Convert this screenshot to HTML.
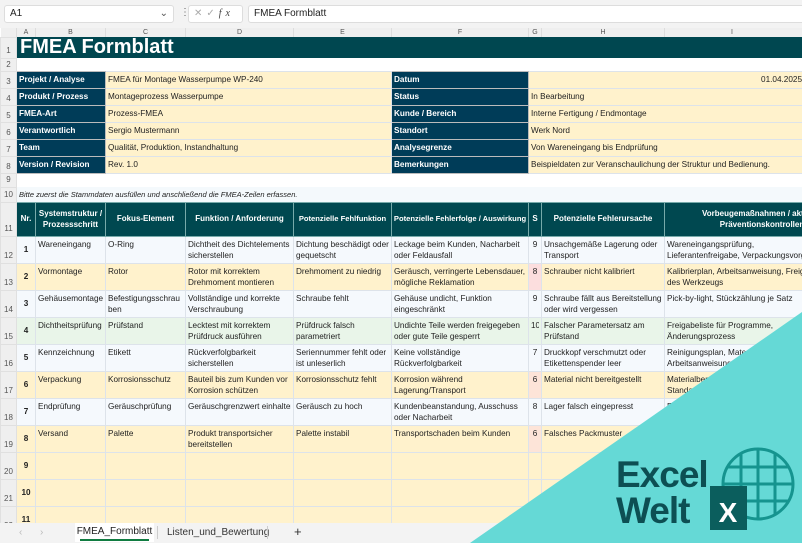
<!DOCTYPE html>
<html><head><meta charset="utf-8"><style>
*{margin:0;padding:0;box-sizing:border-box}
body{width:802px;height:543px;overflow:hidden;background:#fff;font-family:"Liberation Sans",sans-serif;position:relative;color:#222}
#fb{position:absolute;left:0;top:0;width:802px;height:28px;background:#f3f3f3}
.box{position:absolute;top:5px;height:18px;background:#fff;border:1px solid #ddd;border-radius:3px;font-size:10px;line-height:16px;padding-left:5px}
table{position:absolute;left:0;top:28px;border-collapse:collapse;table-layout:fixed;width:864px}
td{overflow:hidden;white-space:nowrap;font-size:8.2px;line-height:11.5px;padding:0 2px;vertical-align:top;border:1px solid #dde3ea}
td.rh{background:#efefef;color:#555;text-align:center;vertical-align:bottom;border:1px solid #e0e0e0;font-size:8px;padding:0 0 1px}
tr.ch td{background:#efefef;color:#555;text-align:center;font-size:7px;line-height:8px;padding:0;vertical-align:middle;border:none;border-right:1px solid #ddd}
.t{background:#004750;color:#fff;font-weight:bold;font-size:20px;vertical-align:middle;padding-left:3px;border:none}
.lb{background:#003c58;color:#fff;font-weight:bold;vertical-align:middle;border:1px solid #bbb}
.y{background:#fff2cc;vertical-align:middle}
.hd td.h{background:#004850;color:#fff;font-weight:bold;text-align:center;vertical-align:middle;border:1px solid #7aa;font-size:8px}
.hd td.h div{height:32px;display:flex;align-items:center;justify-content:center;white-space:normal;overflow:hidden}
tr.d td div{height:26px;overflow:hidden;white-space:normal;padding-top:2px}
tr.d td.n div{display:flex;align-items:center;justify-content:center;padding:0}
.w{background:#f5f9fd}.g{background:#e9f5e9}.n{font-weight:bold}
.s{text-align:center}
.pk{background:#fcdede}.pe{background:#fde4d8}
#tabs{position:absolute;left:0;top:523px;width:802px;height:20px;background:#f3f3f3;font-size:10px}
</style></head><body>
<div id="fb">
<div class="box" style="left:4px;width:170px">A1<span style="position:absolute;right:5px;color:#555">&#8964;</span></div>
<div style="position:absolute;left:180px;top:7px;font-size:10px;color:#666">&#8942;</div>
<div class="box" style="left:188px;width:55px;color:#aaa;letter-spacing:4px">✕✓<i style="color:#444;font-family:'Liberation Serif',serif">fx</i></div>
<div class="box" style="left:248px;width:560px">FMEA Formblatt</div>
</div>
<table>
<colgroup><col style="width:16px"><col style="width:19px"><col style="width:70px"><col style="width:80px"><col style="width:108px"><col style="width:98px"><col style="width:137px"><col style="width:13px"><col style="width:123px"><col style="width:200px"></colgroup>
<tr class="ch" style="height:9px"><td></td><td>A</td><td>B</td><td>C</td><td>D</td><td>E</td><td>F</td><td>G</td><td>H</td><td style="text-align:left;padding-left:66px">I</td></tr>
<tr style="height:21px"><td class="rh">1</td><td class="t" colspan="9">FMEA Formblatt</td></tr>
<tr style="height:11px"><td class="rh">2</td><td colspan="9" style="border:none"></td></tr>
<tr style="height:17px"><td class="rh">3</td><td class="lb" colspan="2">Projekt / Analyse</td><td class="y" colspan="3">FMEA für Montage Wasserpumpe WP-240</td><td class="lb">Datum</td><td class="y" colspan="3" style="text-align:right;padding-right:62px">01.04.2025</td></tr>
<tr style="height:17px"><td class="rh">4</td><td class="lb" colspan="2">Produkt / Prozess</td><td class="y" colspan="3">Montageprozess Wasserpumpe</td><td class="lb">Status</td><td class="y" colspan="3">In Bearbeitung</td></tr>
<tr style="height:17px"><td class="rh">5</td><td class="lb" colspan="2">FMEA-Art</td><td class="y" colspan="3">Prozess-FMEA</td><td class="lb">Kunde / Bereich</td><td class="y" colspan="3">Interne Fertigung / Endmontage</td></tr>
<tr style="height:17px"><td class="rh">6</td><td class="lb" colspan="2">Verantwortlich</td><td class="y" colspan="3">Sergio Mustermann</td><td class="lb">Standort</td><td class="y" colspan="3">Werk Nord</td></tr>
<tr style="height:17px"><td class="rh">7</td><td class="lb" colspan="2">Team</td><td class="y" colspan="3">Qualität, Produktion, Instandhaltung</td><td class="lb">Analysegrenze</td><td class="y" colspan="3">Von Wareneingang bis Endprüfung</td></tr>
<tr style="height:17px"><td class="rh">8</td><td class="lb" colspan="2">Version / Revision</td><td class="y" colspan="3">Rev. 1.0</td><td class="lb">Bemerkungen</td><td class="y" colspan="3">Beispieldaten zur Veranschaulichung der Struktur und Bedienung.</td></tr>
<tr style="height:11px"><td class="rh">9</td><td colspan="9" style="border:none"></td></tr>
<tr style="height:15px"><td class="rh">10</td><td colspan="9" style="background:#f4f9fc;font-style:italic;font-size:7.5px;vertical-align:middle;border:none">Bitte zuerst die Stammdaten ausfüllen und anschließend die FMEA-Zeilen erfassen.</td></tr>
<tr class="hd" style="height:34px"><td class="rh">11</td><td class="h"><div>Nr.</div></td><td class="h"><div>Systemstruktur / Prozessschritt</div></td><td class="h"><div>Fokus-Element</div></td><td class="h"><div>Funktion / Anforderung</div></td><td class="h"><div style="white-space:nowrap;font-size:7.6px">Potenzielle Fehlfunktion</div></td><td class="h"><div style="white-space:nowrap;font-size:7.6px">Potenzielle Fehlerfolge / Auswirkung</div></td><td class="h"><div>S</div></td><td class="h"><div>Potenzielle Fehlerursache</div></td><td class="h"><div style="justify-content:flex-start;padding-left:20px;width:170px;text-align:center">Vorbeugemaßnahmen / aktuelle Präventionskontrollen</div></td></tr>
<tr class="d w"><td class="rh">12</td><td class="n"><div>1</div></td><td><div>Wareneingang</div></td><td><div>O-Ring</div></td><td><div>Dichtheit des Dichtelements sicherstellen</div></td><td><div>Dichtung beschädigt oder gequetscht</div></td><td><div>Leckage beim Kunden, Nacharbeit oder Feldausfall</div></td><td class="s"><div>9</div></td><td><div>Unsachgemäße Lagerung oder Transport</div></td><td><div>Wareneingangsprüfung,<br>Lieferantenfreigabe, Verpackungsvorgabe</div></td></tr>
<tr class="d y"><td class="rh">13</td><td class="n"><div>2</div></td><td><div>Vormontage</div></td><td><div>Rotor</div></td><td><div>Rotor mit korrektem Drehmoment montieren</div></td><td><div>Drehmoment zu niedrig</div></td><td><div>Geräusch, verringerte Lebensdauer, mögliche Reklamation</div></td><td class="s pk"><div>8</div></td><td><div>Schrauber nicht kalibriert</div></td><td><div>Kalibrierplan, Arbeitsanweisung, Freigabe<br>des Werkzeugs</div></td></tr>
<tr class="d w"><td class="rh">14</td><td class="n"><div>3</div></td><td><div>Gehäusemontage</div></td><td><div style="word-break:break-all">Befestigungsschrauben</div></td><td><div>Vollständige und korrekte Verschraubung</div></td><td><div>Schraube fehlt</div></td><td><div>Gehäuse undicht, Funktion eingeschränkt</div></td><td class="s"><div>9</div></td><td><div>Schraube fällt aus Bereitstellung oder wird vergessen</div></td><td><div>Pick-by-light, Stückzählung je Satz</div></td></tr>
<tr class="d g"><td class="rh">15</td><td class="n"><div>4</div></td><td><div>Dichtheitsprüfung</div></td><td><div>Prüfstand</div></td><td><div>Lecktest mit korrektem Prüfdruck ausführen</div></td><td><div>Prüfdruck falsch parametriert</div></td><td><div>Undichte Teile werden freigegeben oder gute Teile gesperrt</div></td><td class="s"><div>10</div></td><td><div>Falscher Parametersatz am Prüfstand</div></td><td><div>Freigabeliste für Programme,<br>Änderungsprozess</div></td></tr>
<tr class="d w"><td class="rh">16</td><td class="n"><div>5</div></td><td><div>Kennzeichnung</div></td><td><div>Etikett</div></td><td><div>Rückverfolgbarkeit sicherstellen</div></td><td><div>Seriennummer fehlt oder ist unleserlich</div></td><td><div>Keine vollständige Rückverfolgbarkeit</div></td><td class="s"><div>7</div></td><td><div>Druckkopf verschmutzt oder Etikettenspender leer</div></td><td><div>Reinigungsplan, Materialprüfung,<br>Arbeitsanweisung</div></td></tr>
<tr class="d y"><td class="rh">17</td><td class="n"><div>6</div></td><td><div>Verpackung</div></td><td><div>Korrosionsschutz</div></td><td><div>Bauteil bis zum Kunden vor Korrosion schützen</div></td><td><div>Korrosionsschutz fehlt</div></td><td><div>Korrosion während Lagerung/Transport</div></td><td class="s pe"><div>6</div></td><td><div>Material nicht bereitgestellt</div></td><td><div>Materialbereitstellung,<br>Standardarbeit</div></td></tr>
<tr class="d w"><td class="rh">18</td><td class="n"><div>7</div></td><td><div>Endprüfung</div></td><td><div>Geräuschprüfung</div></td><td><div style="white-space:nowrap">Geräuschgrenzwert einhalten</div></td><td><div>Geräusch zu hoch</div></td><td><div>Kundenbeanstandung, Ausschuss oder Nacharbeit</div></td><td class="s"><div>8</div></td><td><div>Lager falsch eingepresst</div></td><td><div>Einpresskontrolle</div></td></tr>
<tr class="d y"><td class="rh">19</td><td class="n"><div>8</div></td><td><div>Versand</div></td><td><div>Palette</div></td><td><div>Produkt transportsicher bereitstellen</div></td><td><div>Palette instabil</div></td><td><div>Transportschaden beim Kunden</div></td><td class="s pe"><div>6</div></td><td><div>Falsches Packmuster</div></td><td><div></div></td></tr>
<tr class="d y"><td class="rh">20</td><td class="n"><div>9</div></td><td><div></div></td><td></td><td></td><td></td><td></td><td></td><td></td><td></td></tr>
<tr class="d y"><td class="rh">21</td><td class="n"><div>10</div></td><td><div></div></td><td></td><td></td><td></td><td></td><td></td><td></td><td></td></tr>
<tr class="d y"><td class="rh">22</td><td class="n"><div>11</div></td><td><div></div></td><td></td><td></td><td></td><td></td><td></td><td></td><td></td></tr>
</table>
<div id="tabs">
<span style="position:absolute;left:19px;top:4px;color:#bbb">&#8249;</span>
<span style="position:absolute;left:40px;top:4px;color:#bbb">&#8250;</span>
<div style="position:absolute;left:75px;top:0;width:79px;height:19px;background:#fff;text-align:center;line-height:18px">FMEA_Formblatt<div style="position:absolute;left:5px;right:5px;bottom:1px;height:2px;background:#107c41"></div></div>
<span style="position:absolute;left:167px;top:4px;color:#333">Listen_und_Bewertung</span>
<span style="position:absolute;left:157px;top:3px;width:1px;height:13px;background:#ccc"></span>
<span style="position:absolute;left:267px;top:3px;width:1px;height:13px;background:#ccc"></span>
<span style="position:absolute;left:294px;top:1px;font-size:13px;color:#333">+</span>
</div>
<svg style="position:absolute;left:0;top:0" width="802" height="543">
<polygon points="802,312 470,543 802,543" fill="#65d9d6"/>
<g fill="none" stroke="#15948f" stroke-width="3">
<circle cx="758" cy="484" r="35"/>
<line x1="723" y1="484" x2="793" y2="484"/><line x1="727" y1="467" x2="789" y2="467"/><line x1="727" y1="501" x2="789" y2="501"/>
<line x1="758" y1="449" x2="758" y2="519"/><line x1="741" y1="453" x2="741" y2="515"/><line x1="775" y1="453" x2="775" y2="515"/>
</g>
<rect x="710" y="486" width="37" height="44" fill="#0b5e5d"/>
<text x="728" y="522" text-anchor="middle" fill="#fff" font-family="Liberation Sans,sans-serif" font-weight="bold" font-size="28">X</text>
<text x="616" y="487" fill="#0d4f53" font-family="Liberation Sans,sans-serif" font-weight="bold" font-size="37" letter-spacing="-1">Excel</text>
<text x="616" y="523" fill="#0d4f53" font-family="Liberation Sans,sans-serif" font-weight="bold" font-size="37" letter-spacing="-1">Welt</text>
</svg>
</body></html>
